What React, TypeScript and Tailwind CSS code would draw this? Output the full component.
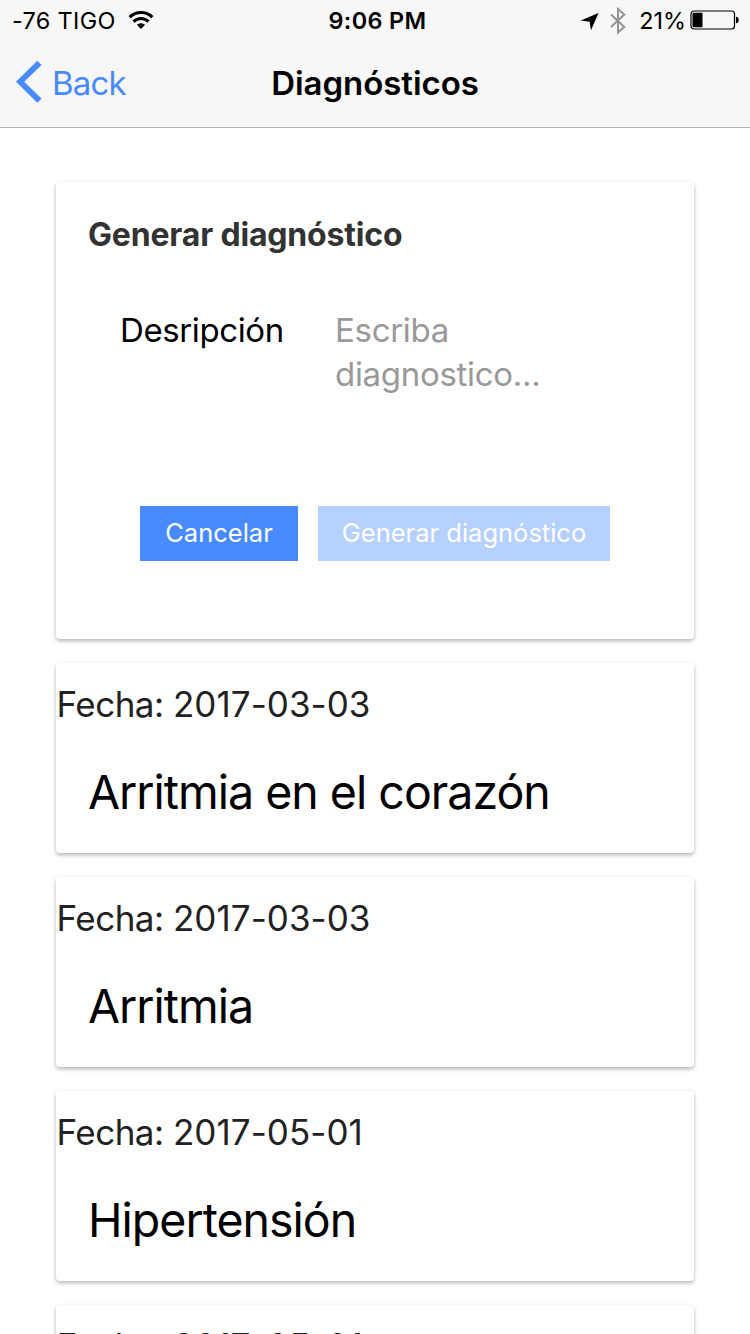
import type { ReactNode } from "react";

const records = [
  { date: "2017-03-03", name: "Arritmia en el corazón" },
  { date: "2017-03-03", name: "Arritmia" },
  { date: "2017-05-01", name: "Hipertensión" },
  { date: "2017-05-01", name: "Hipertensión" },
];

function Card({ className, children }: { className: string; children: ReactNode }) {
  return (
    <section
      className={`shrink-0 rounded-[4px] bg-white shadow-[0_2px_4px_rgba(0,0,0,0.3)] ${className}`}
    >
      {children}
    </section>
  );
}

function StatusBar() {
  return (
    <div className="grid h-[42px] grid-cols-3 items-center pr-[10px] pl-3 text-[23.4px] leading-10">
      <div className="flex items-center">
        <span className="tracking-[0.35px]">-76 TIGO</span>
        <svg className="mb-[2px] ml-3 h-[20px] w-[26px]" viewBox="0 0 26 20" fill="none" stroke="#000">
          <path d="M1.6 7.2C8.2 1 17.8 1 24.4 7.2" strokeWidth="3.1" />
          <path d="M5.5 11.6c4.4-4.2 10.6-4.2 15 0" strokeWidth="3.1" />
          <path d="M13 19l-4.1-4.2c2.4-2.1 5.8-2.1 8.2 0z" fill="#000" stroke="none" />
        </svg>
      </div>
      <span className="pl-[3px] text-center font-semibold tracking-[0.4px]">9:06 PM</span>
      <div className="flex items-center justify-end">
        <svg className="h-[19px] w-[19px]" viewBox="0 0 19 19">
          <path d="M18.5 1L11 18.3 9.6 9.7.8 8.4z" fill="#000" />
        </svg>
        <svg
          className="ml-[10px] h-[28px] w-[18px]"
          viewBox="0 0 18 28"
          fill="none"
          stroke="#949494"
          strokeWidth="2"
        >
          <path d="M2 7.5L15.3 20 9 25.5V2l6.3 5.5L2 20" />
        </svg>
        <span className="ml-[12px] whitespace-nowrap">21%</span>
        <svg className="mb-[3px] ml-[4px] h-[20px] w-[50px]" viewBox="0 0 50 20">
          <rect x="1" y="1" width="43.5" height="18" rx="3" fill="none" stroke="#000" strokeWidth="1.2" />
          <rect x="2.5" y="2.8" width="10" height="14.4" rx="1" fill="#000" />
          <path d="M46 6.7c3.7 0 3.7 6.6 0 6.6z" fill="#000" />
        </svg>
      </div>
    </div>
  );
}

export default function App() {
  return (
    <div className="flex h-[1334px] w-[750px] flex-col overflow-hidden bg-white font-['Inter','Liberation_Sans',sans-serif] text-black">
      <header className="h-32 shrink-0 border-b border-[#b2b2b2] bg-[#f7f7f7]">
        <StatusBar />
        <div className="grid h-[81px] grid-cols-[1fr_auto_1fr] items-center">
          <button className="flex items-center pl-4 text-[33px] leading-[44px] tracking-[-0.8px] text-[#488aff]">
            <svg className="mb-[2px] h-[44px] w-[26px]" viewBox="0 0 26 44" fill="#488aff">
              <path d="M21.3.8L25.6 5 8.2 21.8l17.4 16.9-4.3 4.1L0 21.8z" />
            </svg>
            <span className="ml-[10px]">Back</span>
          </button>
          <h1 className="text-[33px] leading-[44px] font-semibold tracking-[-0.05px]">Diagnósticos</h1>
        </div>
      </header>

      <main className="flex flex-col gap-6 px-14 pt-[54px]">
        <Card className="h-[457px] px-8 pt-[31px]">
          <h2 className="text-[32px] leading-[44px] font-bold tracking-[-0.18px] text-[#333]">
            Generar diagnóstico
          </h2>
          <label className="mt-[51px] flex px-8 text-[33px] leading-[44px]">
            <span className="w-[215px] shrink-0 tracking-[-0.4px]">Desripción</span>
            <textarea
              className="h-[132px] w-[260px] resize-none overflow-hidden tracking-[-0.3px] outline-none placeholder:text-[#999]"
              placeholder="Escriba diagnostico..."
            />
          </label>
          <div className="mt-[66px] flex justify-center gap-5 text-[25.5px] text-white">
            <button className="h-[55px] w-[158px] bg-[#488aff]">Cancelar</button>
            <button className="h-[55px] w-[292px] bg-[#b6d0ff] whitespace-nowrap" disabled>
              Generar diagnóstico
            </button>
          </div>
        </Card>

        {records.map((record, i) => (
          <Card key={i} className="h-[190px] pt-[19px]">
            <p className="pl-[0.5px] text-[35px] leading-[44px] tracking-[-0.5px] text-[#222]">
              Fecha: <span className="tracking-[0.05px]">{record.date}</span>
            </p>
            <p className="mt-9 pl-8 text-[46.5px] leading-[60px] tracking-[-1px]">{record.name}</p>
          </Card>
        ))}
      </main>
    </div>
  );
}
